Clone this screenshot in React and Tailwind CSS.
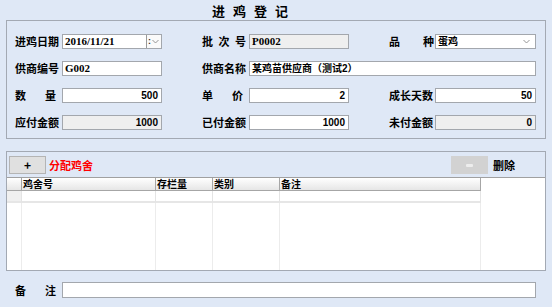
import React from 'react';

const ff = "font-['Noto_Sans_CJK_SC','Liberation_Sans',sans-serif]";

function Label({ text, w = 'w-[47px]', spread }) {
  if (spread) {
    return (
      <div className={`${w} shrink-0 flex items-center`}>
        <div className={`${spread} flex justify-between text-[11px] font-bold leading-none`}>
          {text.split('').map((c, i) => (
            <span key={i}>{c}</span>
          ))}
        </div>
      </div>
    );
  }
  return <div className={`${w} shrink-0 flex items-center text-[11px] font-bold leading-none`}>{text}</div>;
}

function Box({ value, w = 'w-[100px]', right, disabled, serif, children }) {
  return (
    <div
      className={`${w} shrink-0 h-[15px] border border-[#a3a7ad] flex items-center px-[2px] font-bold leading-none ${
        disabled ? 'bg-[#efefef]' : 'bg-white'
      } ${right ? 'justify-end pr-[3px]' : ''} ${
        serif
          ? "text-[11px] font-['Liberation_Serif','Noto_Sans_CJK_SC',serif]"
          : "text-[10px] font-['Liberation_Sans','Noto_Sans_CJK_SC',sans-serif]"
      }`}
    >
      {value}
      {children}
    </div>
  );
}

function Chevron({ className = '' }) {
  return (
    <svg width="7" height="5" viewBox="0 0 7 5" className={className}>
      <path d="M0.5 1 L3.5 4 L6.5 1" fill="none" stroke="#8a8a8a" strokeWidth="0.9" />
    </svg>
  );
}

export default function App() {
  const cols = [
    { name: '', w: 'w-[15px]' },
    { name: '鸡舍号', w: 'w-[134px]' },
    { name: '存栏量', w: 'w-[57px]' },
    { name: '类别', w: 'w-[67px]' },
    { name: '备注', w: 'w-[201px]' },
  ];

  return (
    <div className={`w-[552px] h-[307px] bg-[#dfe8f6] text-black overflow-hidden ${ff}`}>
      {/* 标题 */}
      <div className="h-[20px] flex items-center pl-[212px] text-[13px] font-bold tracking-[8px] leading-none">
        进鸡登记
      </div>

      {/* 基本信息 */}
      <div className="ml-[6px] w-[540px] h-[119px] border border-[#a3a9b3] pt-[13px] pl-[8px] flex flex-col gap-[12px]">
        <div className="flex h-[15px]">
          <Label text="进鸡日期" />
          <Box value="2016/11/21" serif>
            <div className="ml-auto h-[13px] w-[15px] -mr-[2px] border-l border-[#9a9a9a] bg-[#fafafa] flex items-center pl-[1px] gap-[1px]">
              <span className="text-[9px] leading-none text-[#333] font-['Liberation_Sans',sans-serif]">:</span>
              <Chevron />
            </div>
          </Box>
          <div className="w-[40px] shrink-0" />
          <Label text="批次号" spread="w-[44px]" />
          <Box value="P0002" disabled serif />
          <div className="w-[40px] shrink-0" />
          <Label text="品种" w="w-[46px]" spread="w-[45px]" />
          <Box value="蛋鸡" w="w-[101px]">
            <Chevron className="ml-auto mr-[3px]" />
          </Box>
        </div>

        <div className="flex h-[15px]">
          <Label text="供商编号" />
          <Box value="G002" serif />
          <div className="w-[40px] shrink-0" />
          <Label text="供商名称" />
          <Box value="某鸡苗供应商（测试2）" w="w-[287px]" />
        </div>

        <div className="flex h-[15px]">
          <Label text="数量" spread="w-[41px]" />
          <Box value="500" right />
          <div className="w-[40px] shrink-0" />
          <Label text="单价" spread="w-[41px]" />
          <Box value="2" right />
          <div className="w-[40px] shrink-0" />
          <Label text="成长天数" w="w-[46px]" />
          <Box value="50" right w="w-[101px]" />
        </div>

        <div className="flex h-[15px]">
          <Label text="应付金额" />
          <Box value="1000" right disabled />
          <div className="w-[40px] shrink-0" />
          <Label text="已付金额" />
          <Box value="1000" right />
          <div className="w-[40px] shrink-0" />
          <Label text="未付金额" w="w-[46px]" />
          <Box value="0" right disabled w="w-[101px]" />
        </div>
      </div>

      {/* 鸡舍分配 */}
      <div className="mt-[12px] ml-[6px] w-[540px] h-[120px] border border-[#a3a9b3] flex flex-col">
        <div className="mt-[4px] h-[18px] flex items-center pl-[2px]">
          <div className="w-[37px] h-[18px] bg-[#e0e0e0] border border-[#b4b4b4] flex items-center justify-center text-[12px] font-bold leading-none">
            +
          </div>
          <span className="ml-[3px] text-[11px] font-bold text-[#ff0000] leading-none">分配鸡舍</span>
          <div className="ml-auto w-[37px] h-[18px] bg-[#d2d2d2] flex items-center justify-center">
            <div className="w-[7px] h-[3px] rounded-[1px] bg-[#ededed]" />
          </div>
          <span className="ml-[5px] mr-[30px] text-[11px] font-bold leading-none">删除</span>
        </div>

        <div className="mt-[3px] flex-1 bg-white border-t border-[#a0a0a0] flex">
          {cols.map((c, i) => (
            <div key={i} className={`${c.w} shrink-0 flex flex-col`}>
              <div className="h-[13px] bg-linear-to-b from-white to-[#e6e6e6] border-b border-r border-[#a6a6a6] flex items-center pl-[1px] text-[10px] font-bold leading-none">
                {c.name}
              </div>
              <div className={`h-[12px] border-b-2 border-b-[#e6e6e6] border-r border-r-[#e4e4e4] ${i === 0 ? 'bg-[#f0f0f0]' : 'bg-white'}`} />
              <div className="flex-1 border-r border-[#ececec]" />
            </div>
          ))}
          <div className="flex-1" />
        </div>
      </div>

      {/* 备注 */}
      <div className="mt-[11px] flex h-[16px] pl-[15px]">
        <Label text="备注" spread="w-[41px]" />
        <div className="w-[474px] h-[16px] bg-white border border-[#a3a7ad]" />
      </div>
    </div>
  );
}
